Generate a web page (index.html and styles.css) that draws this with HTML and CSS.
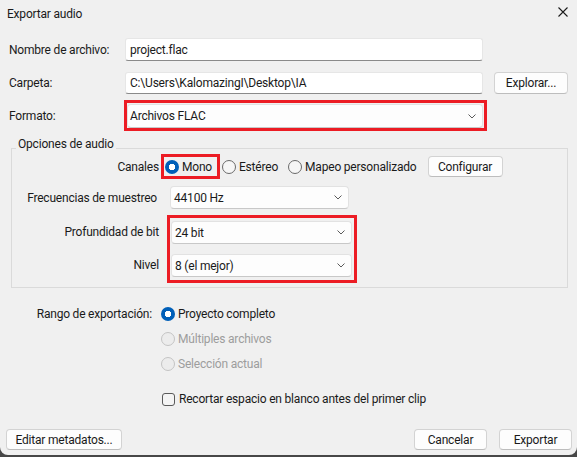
FILE: index.html
```html
<!DOCTYPE html>
<html lang="es">
<head>
<meta charset="utf-8">
<title>Exportar audio</title>
<link rel="stylesheet" href="styles.css">
</head>
<body>
<div class="window">
  <div class="titlebar">
    <span class="title">Exportar audio</span>
    <svg class="close" width="10" height="10" viewBox="0 0 10 10"><path d="M0.5 0.5L9.5 9.5M9.5 0.5L0.5 9.5" stroke="#1b1b1b" stroke-width="1.1" fill="none"/></svg>
  </div>

  <div class="frow r1">
    <span class="flabel">Nombre de archivo:</span>
    <div class="input">project.flac</div>
  </div>
  <div class="frow r2">
    <span class="flabel">Carpeta:</span>
    <div class="input">C:\Users\KalomazingI\Desktop\IA</div>
    <div class="btn explore">Explorar...</div>
  </div>
  <div class="frow r3">
    <span class="flabel short">Formato:</span>
    <div class="redbox fmt">
      <div class="combo fmt-combo"><span>Archivos FLAC</span><svg class="chev" width="8" height="5" viewBox="0 0 8 5"><path d="M0.5 0.5L4 4L7.5 0.5" stroke="#5a5a5a" fill="none"/></svg></div>
    </div>
  </div>

  <div class="group">
    <div class="group-title">Opciones de audio</div>
    <div class="grow rowa">
      <span class="glabel">Canales</span>
      <div class="redbox mono">
        <span class="radio on"></span><span class="rtext">Mono</span>
      </div>
      <span class="radio off ster"></span><span class="rtext">Estéreo</span>
      <span class="radio off mapeo"></span><span class="rtext">Mapeo personalizado</span>
      <div class="btn config">Configurar</div>
    </div>
    <div class="grow rowb">
      <span class="glabel freq">Frecuencias de muestreo</span>
      <div class="combo freq-combo"><span>44100 Hz</span><svg class="chev" width="8" height="5" viewBox="0 0 8 5"><path d="M0.5 0.5L4 4L7.5 0.5" stroke="#5a5a5a" fill="none"/></svg></div>
    </div>
    <div class="grow rowc">
      <div class="glabel stack">
        <span class="slabel">Profundidad de bit</span>
        <span class="slabel">Nivel</span>
      </div>
      <div class="redbox bits">
        <div class="combo bit-combo"><span>24 bit</span><svg class="chev" width="8" height="5" viewBox="0 0 8 5"><path d="M0.5 0.5L4 4L7.5 0.5" stroke="#5a5a5a" fill="none"/></svg></div>
        <div class="combo bit-combo"><span>8 (el mejor)</span><svg class="chev" width="8" height="5" viewBox="0 0 8 5"><path d="M0.5 0.5L4 4L7.5 0.5" stroke="#5a5a5a" fill="none"/></svg></div>
      </div>
    </div>
  </div>

  <div class="range">
    <span class="rlabel">Rango de exportación:</span>
    <div class="ropts">
      <div class="ropt"><span class="radio on"></span><span class="rtext">Proyecto completo</span></div>
      <div class="ropt disabled"><span class="radio dis"></span><span class="rtext">Múltiples archivos</span></div>
      <div class="ropt disabled"><span class="radio dis"></span><span class="rtext">Selección actual</span></div>
      <div class="ropt check"><span class="checkbox"></span><span class="rtext">Recortar espacio en blanco antes del primer clip</span></div>
    </div>
  </div>

  <div class="footer">
    <div class="btn meta">Editar metadatos...</div>
    <div class="spacer"></div>
    <div class="btn cancel">Cancelar</div>
    <div class="btn export">Exportar</div>
  </div>
</div>
</body>
</html>
```

FILE: styles.css
```css
* { box-sizing: border-box; }
html, body { margin: 0; padding: 0; }
body {
  width: 577px;
  height: 457px;
  overflow: hidden;
  background: #474747;
  font-family: Roboto, "Noto Sans", sans-serif;
  font-size: 12px;
  letter-spacing: -0.2px;
  color: #1a1a1a;
}
.window {
  width: 577px;
  height: 455px;
  background: #f0f0f0;
  border-radius: 0 0 8px 8px;
  display: flex;
  flex-direction: column;
}
.titlebar {
  height: 27px;
  display: flex;
  align-items: center;
  padding-left: 7px;
}
.title { flex: 1; line-height: 16px; }
.close { align-self: flex-start; margin-top: 7px; margin-right: 9px; }

.frow { display: flex; align-items: center; }
.flabel { width: 125px; padding-left: 9px; flex-shrink: 0; }
.flabel.short { width: 124px; }
.r1 { margin-top: 11px; height: 23px; }
.r1 .input { height: 23px; }
.r2 { margin-top: 11px; height: 22px; }
.r2 .input { height: 22px; }
.r3 { margin-top: 6px; height: 31px; }

.input {
  width: 358px;
  background: #ffffff;
  border: 1px solid #e6e6e6;
  border-bottom-color: #8a8a8a;
  border-radius: 3px;
  padding-left: 4px;
  display: flex;
  align-items: center;
}
.btn {
  background: #fdfdfd;
  border: 1px solid #d3d3d3;
  border-bottom-color: #bdbdbd;
  border-radius: 4px;
  display: flex;
  align-items: center;
  justify-content: center;
  flex-shrink: 0;
}
.explore { margin-left: 11px; width: 74px; height: 22px; }

.redbox { border: 3px solid #ec1c24; flex-shrink: 0; }
.fmt { width: 363px; height: 31px; padding: 1px 1px 0 0; }
.combo {
  background: #fdfdfd;
  border: 1px solid #e2e2e2;
  border-bottom-color: #c8c8c8;
  border-radius: 4px;
  display: flex;
  align-items: center;
  justify-content: space-between;
  padding: 0 6px 0 3px;
}
.fmt-combo { height: 24px; padding-left: 2px; }
.chev { flex-shrink: 0; }

.group {
  margin: 17px 9px 0 11px;
  border: 1px solid #dadada;
  height: 140px;
}
.group-title {
  width: max-content;
  margin: -13px 0 0 4px;
  padding: 0 2px;
  line-height: 16px;
  background: #f0f0f0;
}
.grow { display: flex; align-items: center; }
.glabel { width: 148px; text-align: right; padding-right: 1px; flex-shrink: 0; }
.rowa { margin-top: 2px; height: 25px; }
.mono { margin-left: 1px; height: 25px; display: flex; align-items: center; padding: 0 5px 0 1px; }
.radio {
  width: 14px;
  height: 14px;
  border-radius: 50%;
  flex-shrink: 0;
  display: inline-block;
}
.radio.on { background: radial-gradient(circle, #ffffff 0 3px, #005fb8 3.5px); }
.radio.off { border: 1px solid #6a6a6a; background: #f6f6f6; }
.radio.dis { border: 1px solid #c4c4c4; background: #ececec; }
.rtext { margin-left: 3px; line-height: 16px; }
.ster { margin-left: 2px; }
.mapeo { margin-left: 10px; }
.config { margin-left: 11px; width: 75px; height: 21px; }

.rowb { margin-top: 7px; height: 23px; }
.freq { padding-right: 3px; }
.freq-combo { margin-left: 10px; width: 179px; height: 23px; }

.rowc { margin-top: 6px; align-items: flex-start; }
.stack { display: flex; flex-direction: column; align-items: flex-end; padding-top: 6px; gap: 10px; }
.slabel { height: 23px; line-height: 23px; }
.bits {
  margin-left: 7px;
  width: 190px;
  height: 68px;
  padding: 3px 2px 3px 1px;
  display: flex;
  flex-direction: column;
  gap: 10px;
}
.bit-combo { height: 23px; }

.range {
  margin-top: 17px;
  display: flex;
  align-items: flex-start;
}
.rlabel { width: 152px; text-align: right; line-height: 18px; flex-shrink: 0; }
.ropts { margin-left: 9px; display: flex; flex-direction: column; gap: 7px; }
.ropt { display: flex; align-items: center; height: 18px; }
.ropt .rtext { margin-left: 3px; }
.disabled { color: #9d9d9d; }
.check { margin-top: 10px; }
.checkbox {
  width: 13px;
  height: 13px;
  margin-left: 1px;
  border: 1px solid #5a5a5a;
  border-radius: 3px;
  background: #f4f4f4;
}
.check .rtext { margin-left: 4px; }

.footer {
  margin-top: 21px;
  display: flex;
  align-items: center;
  padding: 0 5px 0 6px;
  height: 21px;
}
.spacer { flex: 1; }
.meta { width: 116px; height: 21px; }
.cancel { width: 73px; height: 21px; }
.export { width: 73px; height: 21px; margin-left: 12px; }
```
